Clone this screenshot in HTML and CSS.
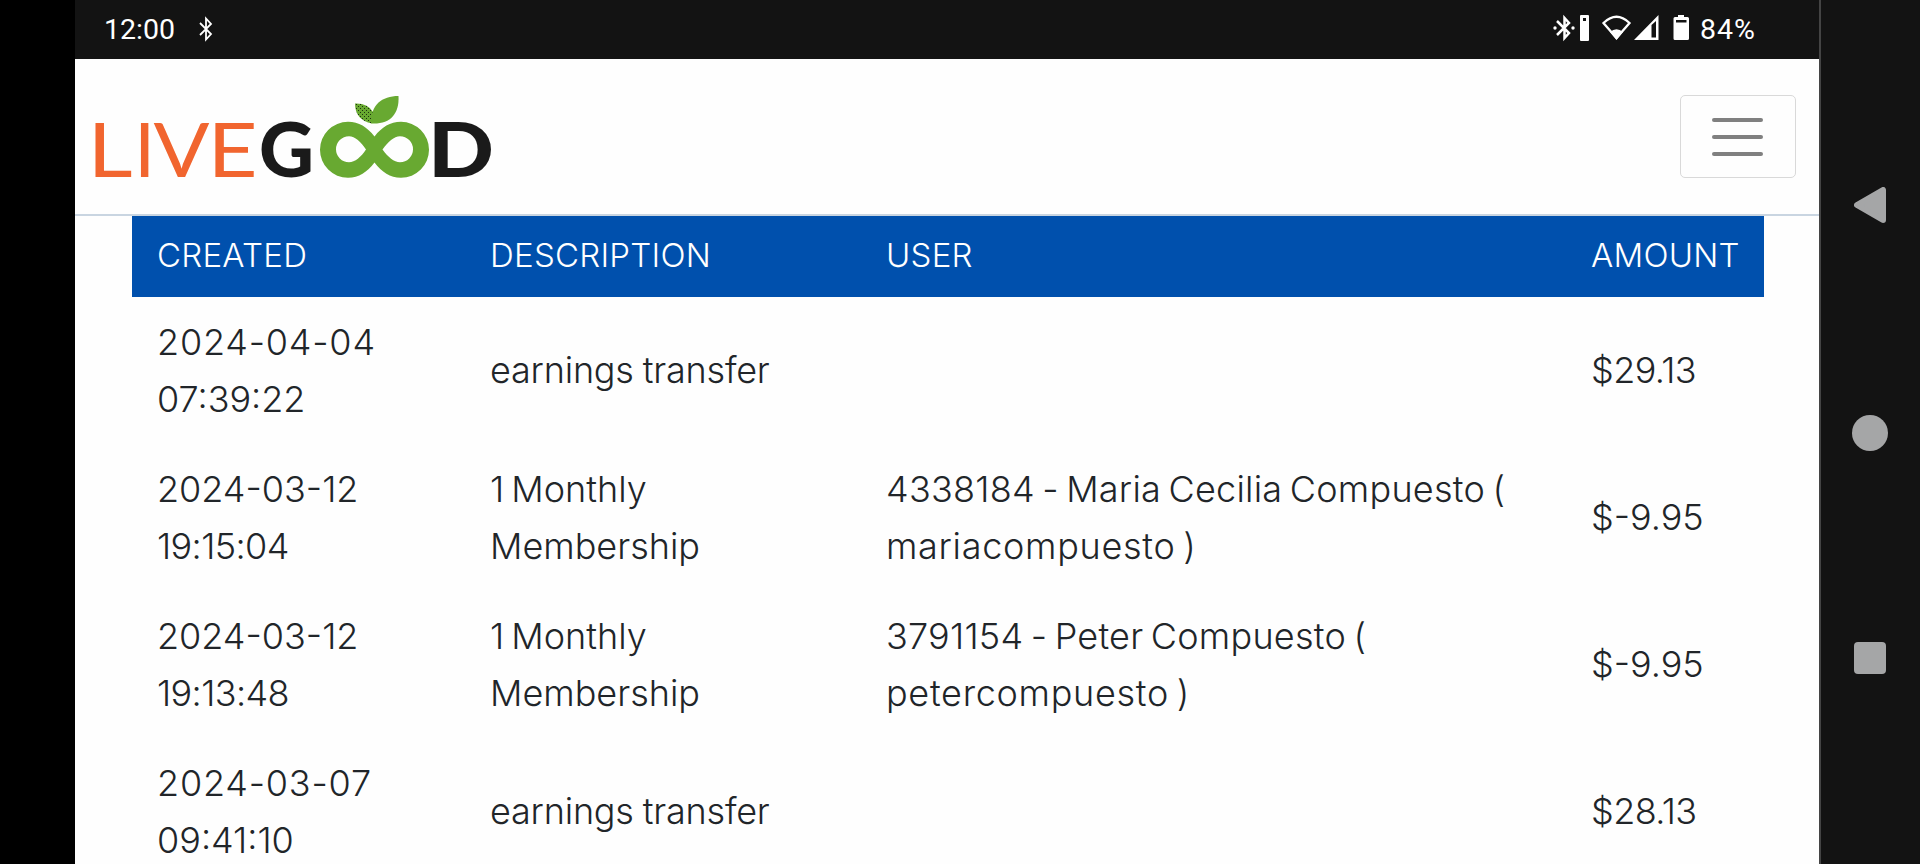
FILE: index.html
```html
<!doctype html>
<html lang="en">
<head>
<meta charset="UTF-8">
<title>LiveGood</title>
<link rel="stylesheet" href="styles.css">
</head>
<body>
<div class="phone">
	<div class="main">
		<div class="status">
			<span class="time">12:00</span>
			<svg class="bt" width="16" height="26" viewBox="0 0 16 26"><path d="M2 7L13 18L8 23.500V2.500L13 8L2 19" fill="none" stroke="#fff" stroke-width="1.800"/></svg>
			<!-- bluetooth + battery of the device, wifi, signal, battery -->
			<svg class="icons" width="140" height="28" viewBox="0 0 140 28">
				<path d="M4 7L16 19L11.500 24V4L16 9L4 21" fill="none" stroke="#fff" stroke-width="2.500"/>
				<circle cx="2" cy="14" r="1.700" fill="#fff"/>
				<circle cx="20" cy="14" r="1.700" fill="#fff"/>
				<path d="M28 1h7a1 1 0 0 1 1 1v24a1 1 0 0 1-1 1h-7a1 1 0 0 1-1-1V2a1 1 0 0 1 1-1zM30 4v3h3V4z" fill="#fff" fill-rule="evenodd"/>
				<path d="M50.500 9Q63.500-3.500 76.500 9L63.500 24z" fill="none" stroke="#fff" stroke-width="2.300"/>
				<path d="M57 18Q63.500 12.500 70 18L63.500 26z" fill="#fff"/>
				<path d="M81 26L105.500 1v25zM98.500 11v12.500h4.500V7z" fill="#fff" fill-rule="evenodd"/>
				<path d="M125 1h6v2h3.500a1.500 1.500 0 0 1 1.500 1.500v20a1.500 1.500 0 0 1-1.500 1.500h-12.500a1.500 1.500 0 0 1-1.500-1.500v-20a1.500 1.500 0 0 1 1.500-1.500h3zM123 6v2.500h10.500V6z" fill="#fff" fill-rule="evenodd"/>
			</svg>
			<span class="percent">84%</span>
		</div>
		<div class="navbar">
			<svg class="logo" width="430" height="110" viewBox="84 83 430 110">
				<defs>
					<pattern id="dots" width="4" height="4" patternUnits="userSpaceOnUse">
						<rect width="4" height="4" fill="#68a931"/>
						<rect width="1" height="1" fill="#1d3310"/>
						<rect x="2" y="2" width="1" height="1" fill="#1d3310"/>
					</pattern>
				</defs>
				<g class="live">
					<text x="87.500" y="176.500" textLength="45" lengthAdjust="spacingAndGlyphs">L</text>
					<text x="134" y="176.500">I</text>
					<text x="153.500" y="176.500" textLength="56" lengthAdjust="spacingAndGlyphs">V</text>
					<text x="207.500" y="176.500" textLength="50" lengthAdjust="spacingAndGlyphs">E</text>
				</g>
				<g class="good">
					<text x="259" y="176.500" textLength="55" lengthAdjust="spacingAndGlyphs">G</text>
					<text x="428" y="176.500" textLength="66" lengthAdjust="spacingAndGlyphs">D</text>
				</g>
				<path fill="#68a931" fill-rule="evenodd" d="M374.500 136.500C367 127 359 121.800 348 121.800A28 28 0 0 0 348 177.800C359 177.800 367 172 374.500 162.500C382 172 390 177.800 401 177.800A28 28 0 0 0 401 121.800C390 121.800 382 127 374.500 136.500ZM366 149.500C361 142 355 136.300 349 136.300A13 13 0 0 0 349 162.300C355 162.300 361 157 366 149.500ZM382.500 149.500C388 142 394 136.300 400 136.300A13 13 0 0 1 400 162.300C394 162.300 388 157 382.500 149.500Z"/>
				<path fill="url(#dots)" d="M355 103.500Q368 103 373 112L372 123.500Q355 120 355 103.500Z"/>
				<path fill="#68a931" d="M398.500 96C399.500 114 390 124.500 371.500 123.500C370 105 382 96 398.500 96Z"/>
			</svg>
			<button class="toggler"><i></i><i></i><i></i></button>
		</div>
		<table class="list">
			<thead>
				<tr>
					<th class="created">CREATED</th>
					<th class="desc">DESCRIPTION</th>
					<th class="user">USER</th>
					<th class="amount">AMOUNT</th>
				</tr>
			</thead>
			<tbody>
				<tr>
					<td><span class="wide">2024-04-04</span><br>07:39:22</td>
					<td><span class="transfer">earnings transfer</span></td>
					<td></td>
					<td><span class="tight">$29.13</span></td>
				</tr>
				<tr>
					<td>2024-03-12<br><span class="tight">19:15:04</span></td>
					<td>1 Monthly<br>Membership</td>
					<td><span class="name">4338184 - Maria Cecilia Compuesto (</span><br><span class="login">mariacompuesto )</span></td>
					<td>$-9.95</td>
				</tr>
				<tr>
					<td>2024-03-12<br><span class="tight">19:13:48</span></td>
					<td>1 Monthly<br>Membership</td>
					<td><span class="name">3791154 - Peter Compuesto (</span><br><span class="login">petercompuesto )</span></td>
					<td>$-9.95</td>
				</tr>
				<tr>
					<td><span class="wide">2024-03-07</span><br>09:41:10</td>
					<td><span class="transfer">earnings transfer</span></td>
					<td></td>
					<td><span class="tight">$28.13</span></td>
				</tr>
			</tbody>
		</table>
	</div>
	<div class="keys">
		<svg width="32" height="36" viewBox="0 0 32 36"><path d="M3 18L29 3v30z" fill="#a5a6a7" stroke="#a5a6a7" stroke-width="6" stroke-linejoin="round"/></svg>
		<span class="home"></span>
		<span class="recent"></span>
	</div>
</div>
</body>
</html>
```
FILE: styles.css
```css
*{ margin:0px; padding:0px; box-sizing:border-box;}
body{
	background-color:#000;
	overflow:hidden;
}
.phone{
	display:flex;
	height:864px;
	padding-left:75px;
	overflow:hidden;
}
.main{
	width:1744px;
	background-color:#fefefe;
	overflow:hidden;
}
.status{
	display:flex;
	align-items:center;
	height:59px;
	padding:0 63px 0 29px;
	background-color:#131313;
	color:#fff;
	font:28.500px/59px Roboto,sans-serif;
}
.status .bt{
	margin-left:23px;
	margin-bottom:2px;
}
.status .icons{
	margin-left:auto;
	margin-right:7px;
	margin-bottom:3px;
}
.percent{
	letter-spacing:1px;
}
.navbar{
	display:flex;
	align-items:flex-start;
	justify-content:space-between;
	height:157px;
	padding:24px 23px 0 9px;
	border-bottom:2px solid #c9d5e1;
}
.logo text{
	font-family:Lato,sans-serif;
	font-size:76px;
}
.live{
	fill:#f1652f;
	font-weight:400;
}
.good{
	fill:#1a1a1a;
	font-weight:900;
}
.toggler{
	display:flex;
	flex-direction:column;
	align-items:center;
	justify-content:center;
	gap:13px;
	width:116px;
	height:83px;
	margin-top:12px;
	padding-right:2px;
	border:1px solid #d9d9d9;
	border-radius:5px;
	background:none;
}
.toggler i{
	width:51px;
	height:4px;
	border-radius:2px;
	background-color:#808080;
}
.list{
	width:1632px;
	margin-left:57px;
	border-collapse:collapse;
	table-layout:fixed;
	font-family:Inter,sans-serif;
	font-weight:300;
	font-size:36px;
	line-height:56.500px;
	color:#212529;
}
.list th{
	height:81px;
	padding:0 0 3px 25px;
	background-color:#0050ad;
	color:#fff;
	font-size:33px;
	font-weight:300;
	letter-spacing:0.250px;
	text-align:left;
}
.list td{
	height:147px;
	padding-left:25px;
	vertical-align:middle;
	white-space:nowrap;
	word-spacing:-3px;
}
.wide{ letter-spacing:0.800px;}
.tight{ letter-spacing:-0.600px;}
.transfer{
	letter-spacing:-0.200px;
	word-spacing:-1px;
}
.name{ letter-spacing:0.250px;}
.login{ letter-spacing:0.700px;}
.created{ width:333px;}
.desc{ width:396px;}
.user{ width:705px;}
.amount{ width:198px;}
.keys{
	display:flex;
	flex-direction:column;
	align-items:center;
	gap:191.500px;
	width:101px;
	padding:187px 2px 0 0;
	border-left:2px solid #444;
	background-color:#131313;
}
.home{
	width:36px;
	height:36px;
	border-radius:50%;
	background-color:#a5a6a7;
}
.recent{
	width:32px;
	height:32px;
	border-radius:4px;
	background-color:#a5a6a7;
}
```
